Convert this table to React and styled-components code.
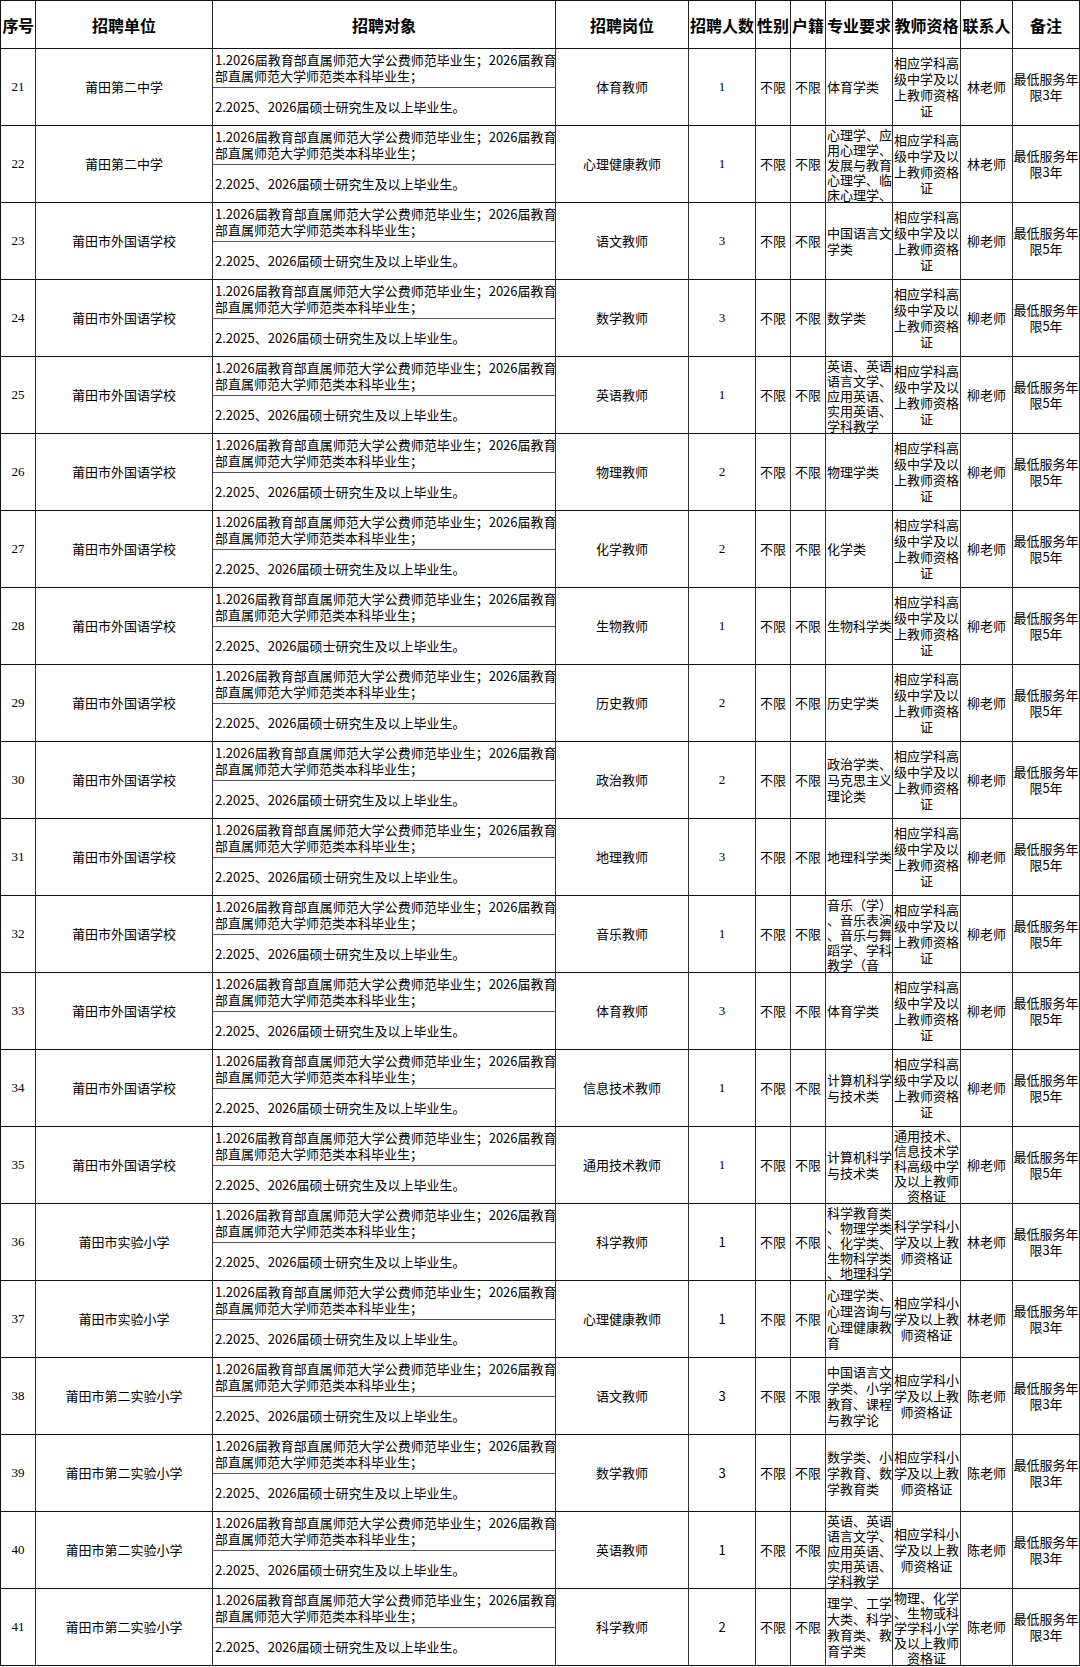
import React from "react";
import styled, { createGlobalStyle } from "styled-components";

const GlobalStyle = createGlobalStyle`
  html, body { margin: 0; padding: 0; background: #fff; }
  body { font-family: "Noto Sans CJK SC", "Liberation Sans", sans-serif; color: #000; }
`;

const COLS = "35px 177px 343px 133px 67px 35px 35px 67px 68px 52px 67px";

const Sheet = styled.div`
  width: 1080px;
  border-left: 1px solid #111;
  border-top: 1px solid #111;
  box-sizing: border-box;
`;

const HeadRow = styled.div`
  display: grid;
  grid-template-columns: ${COLS};
  height: 48px;
`;

const HeadCell = styled.div`
  display: flex;
  align-items: center;
  justify-content: center;
  border-right: 1px solid #222;
  border-bottom: 1px solid #111;
  font-size: 16px;
  font-weight: 700;
  white-space: nowrap;
  overflow: hidden;
  letter-spacing: ${(p) => (p.$tight ? "-0.5px" : "0")};
`;

const Record = styled.div`
  display: grid;
  grid-template-columns: ${COLS};
  grid-template-rows: 39px 38px;
`;

const Cell = styled.div`
  grid-row: 1 / span 2;
  display: flex;
  flex-direction: column;
  justify-content: safe center;
  align-items: ${(p) => (p.$left ? "flex-start" : "center")};
  text-align: ${(p) => (p.$left ? "left" : "center")};
  padding: 0 1px;
  border-right: 1px solid #333;
  border-bottom: 1px solid #111;
  font-size: 13px;
  line-height: ${(p) => (p.$dense ? "15px" : "16px")};
  white-space: pre;
  overflow: hidden;
  box-sizing: border-box;
  font-family: ${(p) =>
    p.$serif ? '"Liberation Serif", "Noto Sans CJK SC", serif' : "inherit"};
`;

const SubCell = styled.div`
  display: flex;
  align-items: center;
  padding: 0 2px;
  border-right: 1px solid #333;
  border-bottom: 1px solid ${(p) => (p.$last ? "#111" : "#555")};
  font-size: 13px;
  line-height: 16px;
  white-space: pre;
  overflow: hidden;
  box-sizing: border-box;
`;

const Target = styled.div`
  grid-row: 1 / span 2;
  display: grid;
  grid-template-rows: 39px 38px;
`;

const T1 =
  "1.2026届教育部直属师范大学公费师范毕业生；2026届教育\n部直属师范大学师范类本科毕业生；";
const T2 = "2.2025、2026届硕士研究生及以上毕业生。";

const Q_HIGH = "相应学科高\n级中学及以\n上教师资格\n证";
const Q_PRIM = "相应学科小\n学及以上教\n师资格证";
const ENG = "英语、英语\n语言文学、\n应用英语、\n实用英语、\n学科教学";

const SCH2 = "莆田第二中学";
const FLS = "莆田市外国语学校";
const EXP = "莆田市实验小学";
const EXP2 = "莆田市第二实验小学";

const rows = [
  [21, SCH2, "体育教师", 1, "体育学类", Q_HIGH, "林老师", 3],
  [22, SCH2, "心理健康教师", 1, "心理学、应\n用心理学、\n发展与教育\n心理学、临\n床心理学、", Q_HIGH, "林老师", 3],
  [23, FLS, "语文教师", 3, "中国语言文\n学类", Q_HIGH, "柳老师", 5],
  [24, FLS, "数学教师", 3, "数学类", Q_HIGH, "柳老师", 5],
  [25, FLS, "英语教师", 1, ENG, Q_HIGH, "柳老师", 5],
  [26, FLS, "物理教师", 2, "物理学类", Q_HIGH, "柳老师", 5],
  [27, FLS, "化学教师", 2, "化学类", Q_HIGH, "柳老师", 5],
  [28, FLS, "生物教师", 1, "生物科学类", Q_HIGH, "柳老师", 5],
  [29, FLS, "历史教师", 2, "历史学类", Q_HIGH, "柳老师", 5],
  [30, FLS, "政治教师", 2, "政治学类、\n马克思主义\n理论类", Q_HIGH, "柳老师", 5],
  [31, FLS, "地理教师", 3, "地理科学类", Q_HIGH, "柳老师", 5],
  [32, FLS, "音乐教师", 1, "音乐（学）\n、音乐表演\n、音乐与舞\n蹈学、学科\n教学（音", Q_HIGH, "柳老师", 5],
  [33, FLS, "体育教师", 3, "体育学类", Q_HIGH, "柳老师", 5],
  [34, FLS, "信息技术教师", 1, "计算机科学\n与技术类", Q_HIGH, "柳老师", 5],
  [35, FLS, "通用技术教师", 1, "计算机科学\n与技术类", "通用技术、\n信息技术学\n科高级中学\n及以上教师\n资格证", "柳老师", 5],
  [36, EXP, "科学教师", 1, "科学教育类\n、物理学类\n、化学类、\n生物科学类\n、地理科学", "科学学科小\n学及以上教\n师资格证", "林老师", 3],
  [37, EXP, "心理健康教师", 1, "心理学类、\n心理咨询与\n心理健康教\n育", Q_PRIM, "林老师", 3],
  [38, EXP2, "语文教师", 3, "中国语言文\n学类、小学\n教育、课程\n与教学论", Q_PRIM, "陈老师", 3],
  [39, EXP2, "数学教师", 3, "数学类、小\n学教育、数\n学教育类", Q_PRIM, "陈老师", 3],
  [40, EXP2, "英语教师", 1, ENG, Q_PRIM, "陈老师", 3],
  [41, EXP2, "科学教师", 2, "理学、工学\n大类、科学\n教育类、教\n育学类", "物理、化学\n、生物或科\n学学科小学\n及以上教师\n资格证", "陈老师", 3],
];

const headers = [
  "序号",
  "招聘单位",
  "招聘对象",
  "招聘岗位",
  "招聘人数",
  "性别",
  "户籍",
  "专业要求",
  "教师资格",
  "联系人",
  "备注",
];

const lines = (s) => s.split("\n").length;

export default function App() {
  return (
    <>
      <GlobalStyle />
      <Sheet>
        <HeadRow>
          {headers.map((h) => (
            <HeadCell key={h} $tight={h === "序号"}>
              {h}
            </HeadCell>
          ))}
        </HeadRow>
        {rows.map(([no, unit, post, num, major, qual, contact, years]) => (
          <Record key={no}>
            <Cell $serif>{no}</Cell>
            <Cell>{unit}</Cell>
            <Target>
              <SubCell>{T1}</SubCell>
              <SubCell $last>{T2}</SubCell>
            </Target>
            <Cell>{post}</Cell>
            <Cell $serif={no < 36}>{num}</Cell>
            <Cell>不限</Cell>
            <Cell>不限</Cell>
            <Cell $left $dense={lines(major) > 4}>
              {major}
            </Cell>
            <Cell $dense={lines(qual) > 4}>{qual}</Cell>
            <Cell>{contact}</Cell>
            <Cell>{`最低服务年\n限${years}年`}</Cell>
          </Record>
        ))}
      </Sheet>
    </>
  );
}
